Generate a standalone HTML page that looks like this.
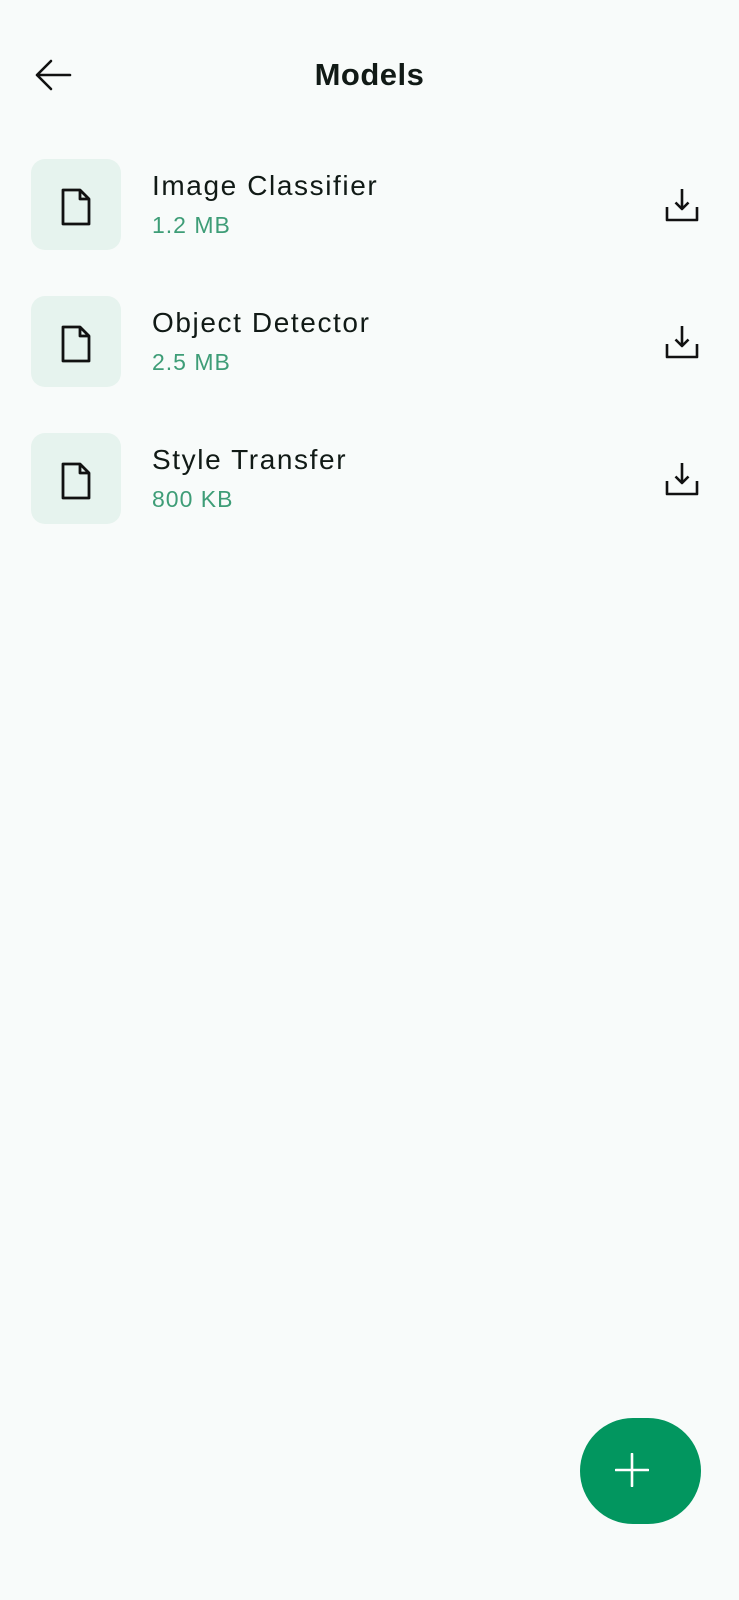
<!DOCTYPE html>
<html><head><style>
body{margin:0;width:739px;height:1600px;background:#f8fbfa;font-family:"Liberation Sans",sans-serif;position:relative;overflow:hidden;color:#111a16}
.a{position:absolute}
.box{left:31px;width:90px;height:91px;border-radius:14px;background:#e6f3ee}
.t{left:152px;font-size:28px;letter-spacing:1.6px}
.s{left:152px;font-size:23px;letter-spacing:1px;color:#3e9d77}
</style></head><body>
<svg class="a" style="left:34px;top:58px" width="40" height="34" viewBox="0 0 40 34"><path d="M36 17H3M17 3L3 17L17 31" fill="none" stroke="#111" stroke-width="2.6" stroke-linecap="round" stroke-linejoin="round"/></svg>
<div class="a" style="left:0;width:739px;top:57px;text-align:center;font-size:31px;font-weight:bold;letter-spacing:0.5px">Models</div>

<div class="a box" style="top:159px"></div>
<div class="a box" style="top:296px"></div>
<div class="a box" style="top:433px"></div>
<svg class="a" style="left:60px;top:187px" width="32" height="40" viewBox="0 0 32 40"><path d="M3 3H20L29 12V37H3Z M20 3V12H29" fill="none" stroke="#111" stroke-width="2.8" stroke-linejoin="round"/></svg>
<svg class="a" style="left:60px;top:324px" width="32" height="40" viewBox="0 0 32 40"><path d="M3 3H20L29 12V37H3Z M20 3V12H29" fill="none" stroke="#111" stroke-width="2.8" stroke-linejoin="round"/></svg>
<svg class="a" style="left:60px;top:461px" width="32" height="40" viewBox="0 0 32 40"><path d="M3 3H20L29 12V37H3Z M20 3V12H29" fill="none" stroke="#111" stroke-width="2.8" stroke-linejoin="round"/></svg>

<div class="a t" style="top:170px">Image Classifier</div>
<div class="a s" style="top:212px">1.2 MB</div>
<div class="a t" style="top:307px">Object Detector</div>
<div class="a s" style="top:349px">2.5 MB</div>
<div class="a t" style="top:444px">Style Transfer</div>
<div class="a s" style="top:486px">800 KB</div>

<svg class="a" style="left:665px;top:187px" width="34" height="35" viewBox="0 0 34 35"><path d="M2 20V33H32V20M17 2V22M10.5 15.5L17 22L23.5 15.5" fill="none" stroke="#111" stroke-width="2.6" stroke-linejoin="round"/></svg>
<svg class="a" style="left:665px;top:324px" width="34" height="35" viewBox="0 0 34 35"><path d="M2 20V33H32V20M17 2V22M10.5 15.5L17 22L23.5 15.5" fill="none" stroke="#111" stroke-width="2.6" stroke-linejoin="round"/></svg>
<svg class="a" style="left:665px;top:461px" width="34" height="35" viewBox="0 0 34 35"><path d="M2 20V33H32V20M17 2V22M10.5 15.5L17 22L23.5 15.5" fill="none" stroke="#111" stroke-width="2.6" stroke-linejoin="round"/></svg>

<div class="a" style="left:580px;top:1418px;width:121px;height:106px;border-radius:53px/53px;background:#02965f"></div>
<svg class="a" style="left:615px;top:1453px" width="34" height="34" viewBox="0 0 34 34"><path d="M17 1V33M1 17H33" stroke="#fff" stroke-width="2.6" stroke-linecap="round"/></svg>
</body></html>
